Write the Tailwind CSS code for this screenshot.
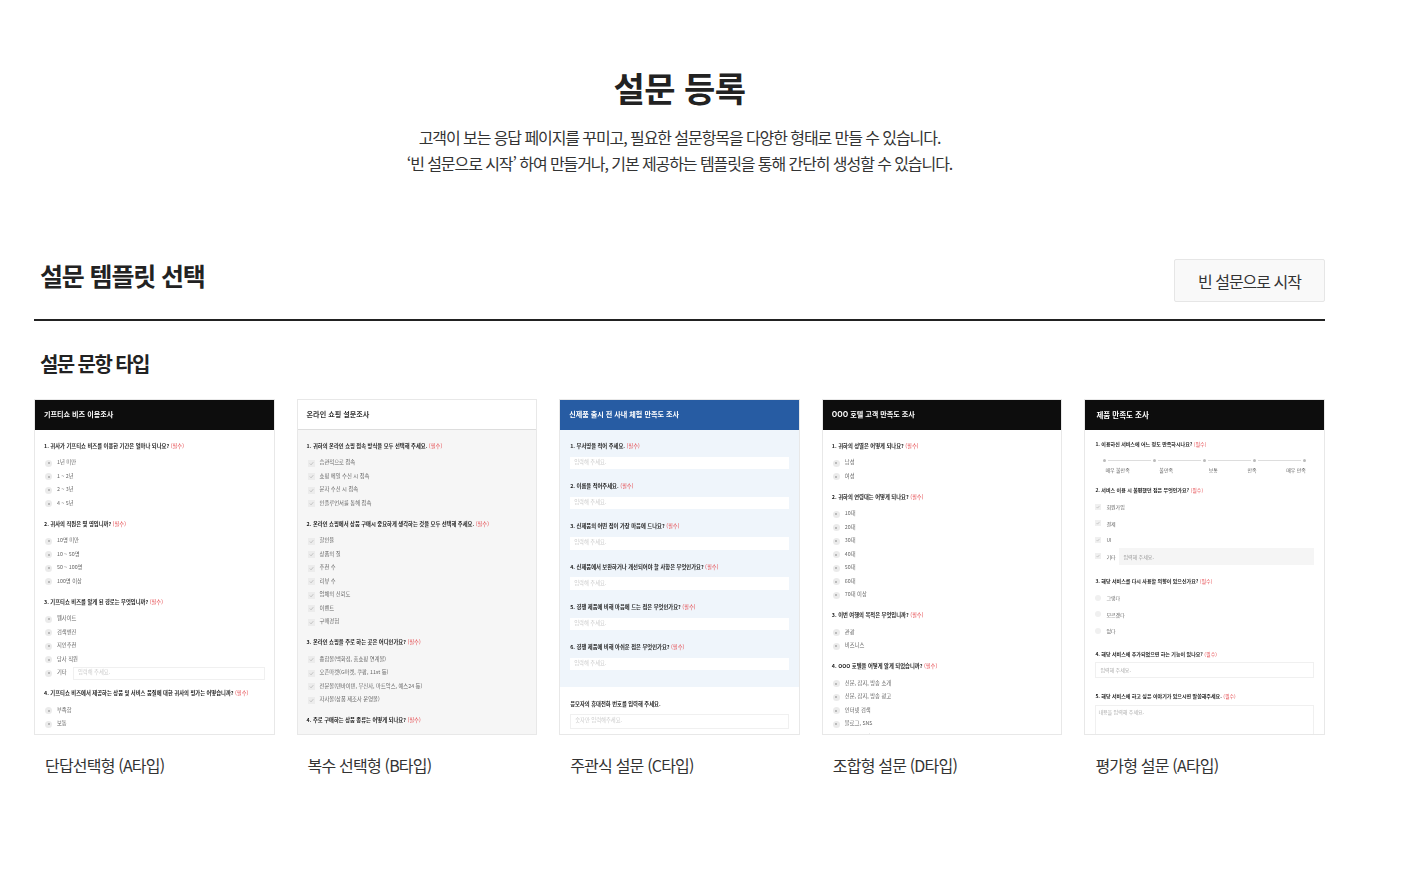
<!DOCTYPE html>
<html lang="ko"><head><meta charset="utf-8"><script src="https://cdn.jsdelivr.net/npm/@tailwindcss/browser@4"></script><title>설문 등록</title></head>
<body class="bg-white font-['Noto_Sans_CJK_KR','Noto_Sans',sans-serif] text-[#222]">
<main class="w-[1404px] h-[894px] overflow-hidden pl-[34px] pr-[79px]">
<section class="flex flex-col items-center pt-[63px]">
<h1 class="text-[34px] leading-[50px] font-bold tracking-[-0.5px]">설문 등록</h1>
<p class="mt-[11px] text-[16px] leading-[26px] tracking-[-1.08px] text-center text-[#333]">고객이 보는 응답 페이지를 꾸미고, 필요한 설문항목을 다양한 형태로 만들 수 있습니다.<br>‘빈 설문으로 시작’ 하여 만들거나, 기본 제공하는 템플릿을 통해 간단히 생성할 수 있습니다.</p>
</section>
<section class="mt-[83px] h-[62px] flex items-start justify-between border-b-2 border-[#222] pl-[6px]">
<h2 class="text-[25px] leading-[40px] font-bold tracking-[-1.15px] mt-[-4px]">설문 템플릿 선택</h2>
<button class="w-[151px] h-[43px] bg-[#f9f9f9] border border-[#e6e6e6] rounded-[2px] text-[16px] tracking-[-1px] text-[#333]">빈 설문으로 시작</button>
</section>
<h3 class="mt-[28px] ml-[6px] text-[20px] leading-[30px] font-bold tracking-[-1.6px]">설문 문항 타입</h3>
<section class="mt-[20px] grid grid-cols-5 gap-x-[22px]">

<article>
<div class="h-[336px] overflow-hidden border border-[#e8e8e8] flex flex-col text-[5.3px] text-[#666] blur-[0.35px]">
<div class="h-[30px] pb-[1px] shrink-0 bg-[#0d0d0d] text-white text-[7.1px] font-bold flex items-center pl-[9px]">기프티쇼 비즈 이용조사</div>
<div class="pt-[10px] pl-[9px] pr-[9px]">
<p class="h-[13.5px] mb-[3px] flex items-center font-bold text-[#222]">1. 귀사가 기프티쇼 비즈를 이용한 기간은 얼마나 되나요?&nbsp;<span class="font-normal text-[#e5484d]">(필수)</span></p>
<div class="h-[13.5px] flex items-center gap-[5px] pl-[1px]"><i class="w-[7px] h-[7px] rounded-full bg-[#ebebeb] flex items-center justify-center"><b class="w-[2px] h-[2px] rounded-full bg-[#aaa]"></b></i>1년 미만</div>
<div class="h-[13.5px] flex items-center gap-[5px] pl-[1px]"><i class="w-[7px] h-[7px] rounded-full bg-[#ebebeb] flex items-center justify-center"><b class="w-[2px] h-[2px] rounded-full bg-[#aaa]"></b></i>1 ~ 2년</div>
<div class="h-[13.5px] flex items-center gap-[5px] pl-[1px]"><i class="w-[7px] h-[7px] rounded-full bg-[#ebebeb] flex items-center justify-center"><b class="w-[2px] h-[2px] rounded-full bg-[#aaa]"></b></i>2 ~ 3년</div>
<div class="h-[13.5px] flex items-center gap-[5px] pl-[1px]"><i class="w-[7px] h-[7px] rounded-full bg-[#ebebeb] flex items-center justify-center"><b class="w-[2px] h-[2px] rounded-full bg-[#aaa]"></b></i>4 ~ 5년</div>
<p class="h-[13.5px] mt-[7.5px] mb-[3px] flex items-center font-bold text-[#222]">2. 귀사의 직원은 몇 명입니까?&nbsp;<span class="font-normal text-[#e5484d]">(필수)</span></p>
<div class="h-[13.5px] flex items-center gap-[5px] pl-[1px]"><i class="w-[7px] h-[7px] rounded-full bg-[#ebebeb] flex items-center justify-center"><b class="w-[2px] h-[2px] rounded-full bg-[#aaa]"></b></i>10명 미만</div>
<div class="h-[13.5px] flex items-center gap-[5px] pl-[1px]"><i class="w-[7px] h-[7px] rounded-full bg-[#ebebeb] flex items-center justify-center"><b class="w-[2px] h-[2px] rounded-full bg-[#aaa]"></b></i>10 ~ 50명</div>
<div class="h-[13.5px] flex items-center gap-[5px] pl-[1px]"><i class="w-[7px] h-[7px] rounded-full bg-[#ebebeb] flex items-center justify-center"><b class="w-[2px] h-[2px] rounded-full bg-[#aaa]"></b></i>50 ~ 100명</div>
<div class="h-[13.5px] flex items-center gap-[5px] pl-[1px]"><i class="w-[7px] h-[7px] rounded-full bg-[#ebebeb] flex items-center justify-center"><b class="w-[2px] h-[2px] rounded-full bg-[#aaa]"></b></i>100명 이상</div>
<p class="h-[13.5px] mt-[7.5px] mb-[3px] flex items-center font-bold text-[#222]">3. 기프티쇼 비즈를 알게 된 경로는 무엇입니까?&nbsp;<span class="font-normal text-[#e5484d]">(필수)</span></p>
<div class="h-[13.5px] flex items-center gap-[5px] pl-[1px]"><i class="w-[7px] h-[7px] rounded-full bg-[#ebebeb] flex items-center justify-center"><b class="w-[2px] h-[2px] rounded-full bg-[#aaa]"></b></i>웹사이트</div>
<div class="h-[13.5px] flex items-center gap-[5px] pl-[1px]"><i class="w-[7px] h-[7px] rounded-full bg-[#ebebeb] flex items-center justify-center"><b class="w-[2px] h-[2px] rounded-full bg-[#aaa]"></b></i>검색엔진</div>
<div class="h-[13.5px] flex items-center gap-[5px] pl-[1px]"><i class="w-[7px] h-[7px] rounded-full bg-[#ebebeb] flex items-center justify-center"><b class="w-[2px] h-[2px] rounded-full bg-[#aaa]"></b></i>지인추천</div>
<div class="h-[13.5px] flex items-center gap-[5px] pl-[1px]"><i class="w-[7px] h-[7px] rounded-full bg-[#ebebeb] flex items-center justify-center"><b class="w-[2px] h-[2px] rounded-full bg-[#aaa]"></b></i>당사 직원</div>
<div class="h-[13.5px] flex items-center gap-[5px] pl-[1px]"><i class="w-[7px] h-[7px] rounded-full bg-[#ebebeb] flex items-center justify-center"><b class="w-[2px] h-[2px] rounded-full bg-[#aaa]"></b></i><span class="w-[11px]">기타</span><span class="flex-1 h-[13.5px] border border-[#f0f0f0] text-[#ccc] pl-[4px] flex items-center">입력해 주세요.</span></div>
<p class="h-[13.5px] mt-[7.5px] mb-[3px] flex items-center font-bold text-[#222]">4. 기프티쇼 비즈에서 제공하는 상품 및 서비스 품질에 대한 귀사의 평가는 어떻습니까?&nbsp;<span class="font-normal text-[#e5484d]">(필수)</span></p>
<div class="h-[13.5px] flex items-center gap-[5px] pl-[1px]"><i class="w-[7px] h-[7px] rounded-full bg-[#ebebeb] flex items-center justify-center"><b class="w-[2px] h-[2px] rounded-full bg-[#aaa]"></b></i>부족함</div>
<div class="h-[13.5px] flex items-center gap-[5px] pl-[1px]"><i class="w-[7px] h-[7px] rounded-full bg-[#ebebeb] flex items-center justify-center"><b class="w-[2px] h-[2px] rounded-full bg-[#aaa]"></b></i>보통</div>
</div></div>
<p class="mt-[18px] pl-[11px] text-[16px] leading-[24px] tracking-[-0.8px] text-[#333]">단답선택형 (A타입)</p>
</article>

<article>
<div class="h-[336px] overflow-hidden border border-[#e8e8e8] flex flex-col text-[5.3px] text-[#666] bg-[#f6f6f6] blur-[0.35px]">
<div class="h-[30px] pb-[1px] shrink-0 bg-white border-b border-[#ddd] text-[#333] text-[7.1px] font-bold flex items-center pl-[9px]">온라인 쇼핑 설문조사</div>
<div class="pt-[10px] pl-[9px] pr-[9px]">
<p class="h-[13.5px] mb-[3px] flex items-center font-bold text-[#222]">1. 귀하의 온라인 쇼핑 접속 방식을 모두 선택해 주세요.&nbsp;<span class="font-normal text-[#e5484d]">(필수)</span></p>
<div class="h-[13.5px] flex items-center gap-[5px] pl-[1px]"><svg class="w-[7px] h-[7px] bg-[#ececec]" viewBox="0 0 8 8"><path d="M2 4l1.5 1.5L6 2.5" fill="none" stroke="#aaa" stroke-width=".7"/></svg>습관적으로 접속</div>
<div class="h-[13.5px] flex items-center gap-[5px] pl-[1px]"><svg class="w-[7px] h-[7px] bg-[#ececec]" viewBox="0 0 8 8"><path d="M2 4l1.5 1.5L6 2.5" fill="none" stroke="#aaa" stroke-width=".7"/></svg>쇼핑 메일 수신 시 접속</div>
<div class="h-[13.5px] flex items-center gap-[5px] pl-[1px]"><svg class="w-[7px] h-[7px] bg-[#ececec]" viewBox="0 0 8 8"><path d="M2 4l1.5 1.5L6 2.5" fill="none" stroke="#aaa" stroke-width=".7"/></svg>문자 수신 시 접속</div>
<div class="h-[13.5px] flex items-center gap-[5px] pl-[1px]"><svg class="w-[7px] h-[7px] bg-[#ececec]" viewBox="0 0 8 8"><path d="M2 4l1.5 1.5L6 2.5" fill="none" stroke="#aaa" stroke-width=".7"/></svg>인플루언서를 통해 접속</div>
<p class="h-[13.5px] mt-[7.5px] mb-[3px] flex items-center font-bold text-[#222]">2. 온라인 쇼핑에서 상품 구매시 중요하게 생각하는 것을 모두 선택해 주세요.&nbsp;<span class="font-normal text-[#e5484d]">(필수)</span></p>
<div class="h-[13.5px] flex items-center gap-[5px] pl-[1px]"><svg class="w-[7px] h-[7px] bg-[#ececec]" viewBox="0 0 8 8"><path d="M2 4l1.5 1.5L6 2.5" fill="none" stroke="#aaa" stroke-width=".7"/></svg>할인율</div>
<div class="h-[13.5px] flex items-center gap-[5px] pl-[1px]"><svg class="w-[7px] h-[7px] bg-[#ececec]" viewBox="0 0 8 8"><path d="M2 4l1.5 1.5L6 2.5" fill="none" stroke="#aaa" stroke-width=".7"/></svg>상품의 질</div>
<div class="h-[13.5px] flex items-center gap-[5px] pl-[1px]"><svg class="w-[7px] h-[7px] bg-[#ececec]" viewBox="0 0 8 8"><path d="M2 4l1.5 1.5L6 2.5" fill="none" stroke="#aaa" stroke-width=".7"/></svg>추천 수</div>
<div class="h-[13.5px] flex items-center gap-[5px] pl-[1px]"><svg class="w-[7px] h-[7px] bg-[#ececec]" viewBox="0 0 8 8"><path d="M2 4l1.5 1.5L6 2.5" fill="none" stroke="#aaa" stroke-width=".7"/></svg>리뷰 수</div>
<div class="h-[13.5px] flex items-center gap-[5px] pl-[1px]"><svg class="w-[7px] h-[7px] bg-[#ececec]" viewBox="0 0 8 8"><path d="M2 4l1.5 1.5L6 2.5" fill="none" stroke="#aaa" stroke-width=".7"/></svg>업체의 신뢰도</div>
<div class="h-[13.5px] flex items-center gap-[5px] pl-[1px]"><svg class="w-[7px] h-[7px] bg-[#ececec]" viewBox="0 0 8 8"><path d="M2 4l1.5 1.5L6 2.5" fill="none" stroke="#aaa" stroke-width=".7"/></svg>이벤트</div>
<div class="h-[13.5px] flex items-center gap-[5px] pl-[1px]"><svg class="w-[7px] h-[7px] bg-[#ececec]" viewBox="0 0 8 8"><path d="M2 4l1.5 1.5L6 2.5" fill="none" stroke="#aaa" stroke-width=".7"/></svg>구매경험</div>
<p class="h-[13.5px] mt-[7.5px] mb-[3px] flex items-center font-bold text-[#222]">3. 온라인 쇼핑을 주로 하는 곳은 어디인가요?&nbsp;<span class="font-normal text-[#e5484d]">(필수)</span></p>
<div class="h-[13.5px] flex items-center gap-[5px] pl-[1px]"><svg class="w-[7px] h-[7px] bg-[#ececec]" viewBox="0 0 8 8"><path d="M2 4l1.5 1.5L6 2.5" fill="none" stroke="#aaa" stroke-width=".7"/></svg>종합몰(백화점, 홈쇼핑 연계몰)</div>
<div class="h-[13.5px] flex items-center gap-[5px] pl-[1px]"><svg class="w-[7px] h-[7px] bg-[#ececec]" viewBox="0 0 8 8"><path d="M2 4l1.5 1.5L6 2.5" fill="none" stroke="#aaa" stroke-width=".7"/></svg>오픈마켓(G마켓, 쿠팡, 11st 등)</div>
<div class="h-[13.5px] flex items-center gap-[5px] pl-[1px]"><svg class="w-[7px] h-[7px] bg-[#ececec]" viewBox="0 0 8 8"><path d="M2 4l1.5 1.5L6 2.5" fill="none" stroke="#aaa" stroke-width=".7"/></svg>전문몰(텐바이텐, 무신사, 마트악스, 예스24 등)</div>
<div class="h-[13.5px] flex items-center gap-[5px] pl-[1px]"><svg class="w-[7px] h-[7px] bg-[#ececec]" viewBox="0 0 8 8"><path d="M2 4l1.5 1.5L6 2.5" fill="none" stroke="#aaa" stroke-width=".7"/></svg>자사몰(상품 제조사 운영몰)</div>
<p class="h-[13.5px] mt-[7.5px] mb-[3px] flex items-center font-bold text-[#222]">4. 주로 구매하는 상품 종류는 어떻게 되나요?&nbsp;<span class="font-normal text-[#e5484d]">(필수)</span></p>
<div class="h-[13.5px] flex items-center gap-[5px] pl-[1px]"><svg class="w-[7px] h-[7px] bg-[#ececec]" viewBox="0 0 8 8"><path d="M2 4l1.5 1.5L6 2.5" fill="none" stroke="#aaa" stroke-width=".7"/></svg>패션잡화</div>
</div></div>
<p class="mt-[18px] pl-[11px] text-[16px] leading-[24px] tracking-[-0.8px] text-[#333]">복수 선택형 (B타입)</p>
</article>

<article>
<div class="h-[336px] overflow-hidden border border-[#e8e8e8] flex flex-col text-[5.3px] text-[#666] bg-white blur-[0.35px]">
<div class="h-[30px] pb-[1px] shrink-0 bg-[#275ca3] text-white text-[7.1px] font-bold flex items-center pl-[9px]">신제품 출시 전 사내 체험 만족도 조사</div>
<div class="h-[257px] shrink-0 bg-[#eff5fb] pt-[10px] px-[10px]">
<p class="h-[13.5px] mb-[3px] flex items-center font-bold text-[#222]">1. 부서명을 적어 주세요.&nbsp;<span class="font-normal text-[#e5484d]">(필수)</span></p>
<div class="h-[12.5px] mb-[11.3px] bg-white text-[#ccc] pl-[4px] flex items-center">입력해 주세요.</div>
<p class="h-[13.5px] mb-[3px] flex items-center font-bold text-[#222]">2. 이름을 적어주세요.&nbsp;<span class="font-normal text-[#e5484d]">(필수)</span></p>
<div class="h-[12.5px] mb-[11.3px] bg-white text-[#ccc] pl-[4px] flex items-center">입력해 주세요.</div>
<p class="h-[13.5px] mb-[3px] flex items-center font-bold text-[#222]">3. 신제품의 어떤 점이 가장 마음에 드나요?&nbsp;<span class="font-normal text-[#e5484d]">(필수)</span></p>
<div class="h-[12.5px] mb-[11.3px] bg-white text-[#ccc] pl-[4px] flex items-center">입력해 주세요.</div>
<p class="h-[13.5px] mb-[3px] flex items-center font-bold text-[#222]">4. 신제품에서 보완하거나 개선되어야 할 사항은 무엇인가요?&nbsp;<span class="font-normal text-[#e5484d]">(필수)</span></p>
<div class="h-[12.5px] mb-[11.3px] bg-white text-[#ccc] pl-[4px] flex items-center">입력해 주세요.</div>
<p class="h-[13.5px] mb-[3px] flex items-center font-bold text-[#222]">5. 경쟁 제품에 비해 마음에 드는 점은 무엇인가요?&nbsp;<span class="font-normal text-[#e5484d]">(필수)</span></p>
<div class="h-[12.5px] mb-[11.3px] bg-white text-[#ccc] pl-[4px] flex items-center">입력해 주세요.</div>
<p class="h-[13.5px] mb-[3px] flex items-center font-bold text-[#222]">6. 경쟁 제품에 비해 아쉬운 점은 무엇인가요?&nbsp;<span class="font-normal text-[#e5484d]">(필수)</span></p>
<div class="h-[12.5px] bg-white text-[#ccc] pl-[4px] flex items-center">입력해 주세요.</div>
</div>
<div class="pt-[11px] px-[10px]">
<p class="h-[13.5px] mb-[2px] flex items-center font-bold text-[#222]">응모자의 휴대전화 번호를 입력해 주세요.</p>
<div class="h-[15px] border border-[#f0f0f0] text-[#ccc] pl-[4px] flex items-center">숫자만 입력해주세요.</div>
</div></div>
<p class="mt-[18px] pl-[11px] text-[16px] leading-[24px] tracking-[-0.8px] text-[#333]">주관식 설문 (C타입)</p>
</article>

<article>
<div class="h-[336px] overflow-hidden border border-[#e8e8e8] flex flex-col text-[5.3px] text-[#666] blur-[0.35px]">
<div class="h-[30px] pb-[1px] shrink-0 bg-[#0d0d0d] text-white text-[7.1px] font-bold flex items-center pl-[9px]">OOO 호텔 고객 만족도 조사</div>
<div class="pt-[10px] pl-[9px] pr-[9px]">
<p class="h-[13.5px] mb-[3px] flex items-center font-bold text-[#222]">1. 귀하의 성별은 어떻게 되나요?&nbsp;<span class="font-normal text-[#e5484d]">(필수)</span></p>
<div class="h-[13.5px] flex items-center gap-[5px] pl-[1px]"><i class="w-[7px] h-[7px] rounded-full bg-[#ebebeb] flex items-center justify-center"><b class="w-[2px] h-[2px] rounded-full bg-[#aaa]"></b></i>남성</div>
<div class="h-[13.5px] flex items-center gap-[5px] pl-[1px]"><i class="w-[7px] h-[7px] rounded-full bg-[#ebebeb] flex items-center justify-center"><b class="w-[2px] h-[2px] rounded-full bg-[#aaa]"></b></i>여성</div>
<p class="h-[13.5px] mt-[7.5px] mb-[3px] flex items-center font-bold text-[#222]">2. 귀하의 연령대는 어떻게 되나요?&nbsp;<span class="font-normal text-[#e5484d]">(필수)</span></p>
<div class="h-[13.5px] flex items-center gap-[5px] pl-[1px]"><i class="w-[7px] h-[7px] rounded-full bg-[#ebebeb] flex items-center justify-center"><b class="w-[2px] h-[2px] rounded-full bg-[#aaa]"></b></i>10대</div>
<div class="h-[13.5px] flex items-center gap-[5px] pl-[1px]"><i class="w-[7px] h-[7px] rounded-full bg-[#ebebeb] flex items-center justify-center"><b class="w-[2px] h-[2px] rounded-full bg-[#aaa]"></b></i>20대</div>
<div class="h-[13.5px] flex items-center gap-[5px] pl-[1px]"><i class="w-[7px] h-[7px] rounded-full bg-[#ebebeb] flex items-center justify-center"><b class="w-[2px] h-[2px] rounded-full bg-[#aaa]"></b></i>30대</div>
<div class="h-[13.5px] flex items-center gap-[5px] pl-[1px]"><i class="w-[7px] h-[7px] rounded-full bg-[#ebebeb] flex items-center justify-center"><b class="w-[2px] h-[2px] rounded-full bg-[#aaa]"></b></i>40대</div>
<div class="h-[13.5px] flex items-center gap-[5px] pl-[1px]"><i class="w-[7px] h-[7px] rounded-full bg-[#ebebeb] flex items-center justify-center"><b class="w-[2px] h-[2px] rounded-full bg-[#aaa]"></b></i>50대</div>
<div class="h-[13.5px] flex items-center gap-[5px] pl-[1px]"><i class="w-[7px] h-[7px] rounded-full bg-[#ebebeb] flex items-center justify-center"><b class="w-[2px] h-[2px] rounded-full bg-[#aaa]"></b></i>60대</div>
<div class="h-[13.5px] flex items-center gap-[5px] pl-[1px]"><i class="w-[7px] h-[7px] rounded-full bg-[#ebebeb] flex items-center justify-center"><b class="w-[2px] h-[2px] rounded-full bg-[#aaa]"></b></i>70대 이상</div>
<p class="h-[13.5px] mt-[7.5px] mb-[3px] flex items-center font-bold text-[#222]">3. 이번 여행의 목적은 무엇입니까?&nbsp;<span class="font-normal text-[#e5484d]">(필수)</span></p>
<div class="h-[13.5px] flex items-center gap-[5px] pl-[1px]"><i class="w-[7px] h-[7px] rounded-full bg-[#ebebeb] flex items-center justify-center"><b class="w-[2px] h-[2px] rounded-full bg-[#aaa]"></b></i>관광</div>
<div class="h-[13.5px] flex items-center gap-[5px] pl-[1px]"><i class="w-[7px] h-[7px] rounded-full bg-[#ebebeb] flex items-center justify-center"><b class="w-[2px] h-[2px] rounded-full bg-[#aaa]"></b></i>비즈니스</div>
<p class="h-[13.5px] mt-[7.5px] mb-[3px] flex items-center font-bold text-[#222]">4. OOO 호텔을 어떻게 알게 되었습니까?&nbsp;<span class="font-normal text-[#e5484d]">(필수)</span></p>
<div class="h-[13.5px] flex items-center gap-[5px] pl-[1px]"><i class="w-[7px] h-[7px] rounded-full bg-[#ebebeb] flex items-center justify-center"><b class="w-[2px] h-[2px] rounded-full bg-[#aaa]"></b></i>신문, 잡지, 방송 소개</div>
<div class="h-[13.5px] flex items-center gap-[5px] pl-[1px]"><i class="w-[7px] h-[7px] rounded-full bg-[#ebebeb] flex items-center justify-center"><b class="w-[2px] h-[2px] rounded-full bg-[#aaa]"></b></i>신문, 잡지, 방송 광고</div>
<div class="h-[13.5px] flex items-center gap-[5px] pl-[1px]"><i class="w-[7px] h-[7px] rounded-full bg-[#ebebeb] flex items-center justify-center"><b class="w-[2px] h-[2px] rounded-full bg-[#aaa]"></b></i>인터넷 검색</div>
<div class="h-[13.5px] flex items-center gap-[5px] pl-[1px]"><i class="w-[7px] h-[7px] rounded-full bg-[#ebebeb] flex items-center justify-center"><b class="w-[2px] h-[2px] rounded-full bg-[#aaa]"></b></i>블로그, SNS</div>
<div class="h-[13.5px] flex items-center gap-[5px] pl-[1px]"><i class="w-[7px] h-[7px] rounded-full bg-[#ebebeb] flex items-center justify-center"><b class="w-[2px] h-[2px] rounded-full bg-[#aaa]"></b></i>주변인의 권유</div>
</div></div>
<p class="mt-[18px] pl-[11px] text-[16px] leading-[24px] tracking-[-0.8px] text-[#333]">조합형 설문 (D타입)</p>
</article>

<article>
<div class="h-[336px] overflow-hidden border border-[#e8e8e8] flex flex-col text-[5px] text-[#666] blur-[0.4px]">
<div class="h-[30px] shrink-0 bg-[#0d0d0d] text-white text-[7.5px] font-bold flex items-center pl-[11px]">제품 만족도 조사</div>
<div class="pt-[7px] px-[10px]">
<p class="h-[13.5px] flex items-center font-bold text-[#222]">1. 이용하신 서비스에 어느 정도 만족하시나요?&nbsp;<span class="font-normal text-[#e5484d]">(필수)</span></p>
<div class="mx-[8px] mt-[5px] h-[9px] flex items-center justify-between">
<i class="w-[3px] h-[3px] rounded-full bg-[#bbb]"></i><span class="flex-1 h-px bg-[#ddd] mx-[2px]"></span><i class="w-[3px] h-[3px] rounded-full bg-[#bbb]"></i><span class="flex-1 h-px bg-[#ddd] mx-[2px]"></span><i class="w-[3px] h-[3px] rounded-full bg-[#bbb]"></i><span class="flex-1 h-px bg-[#ddd] mx-[2px]"></span><i class="w-[3px] h-[3px] rounded-full bg-[#bbb]"></i><span class="flex-1 h-px bg-[#ddd] mx-[2px]"></span><i class="w-[3px] h-[3px] rounded-full bg-[#bbb]"></i>
</div>
<div class="mt-[1px] pl-[10px] pr-[8px] h-[9px] flex items-center justify-between"><span>매우 불만족</span><span class="mr-[6px]">불만족</span><span>보통</span><span>만족</span><span>매우 만족</span></div>
<p class="h-[13.5px] mt-[8px] mb-[2.5px] flex items-center font-bold text-[#222]">2. 서비스 이용 시 불편했던 점은 무엇인가요?&nbsp;<span class="font-normal text-[#e5484d]">(필수)</span></p>
<div class="h-[16.5px] flex items-center gap-[5px]"><svg class="w-[6px] h-[6px] bg-[#f0f0f0]" viewBox="0 0 8 8"><path d="M2 4l1.5 1.5L6 2.5" fill="none" stroke="#aaa" stroke-width=".7"/></svg>회원가입</div>
<div class="h-[16.5px] flex items-center gap-[5px]"><svg class="w-[6px] h-[6px] bg-[#f0f0f0]" viewBox="0 0 8 8"><path d="M2 4l1.5 1.5L6 2.5" fill="none" stroke="#aaa" stroke-width=".7"/></svg>결제</div>
<div class="h-[16.5px] flex items-center gap-[5px]"><svg class="w-[6px] h-[6px] bg-[#f0f0f0]" viewBox="0 0 8 8"><path d="M2 4l1.5 1.5L6 2.5" fill="none" stroke="#aaa" stroke-width=".7"/></svg>UI</div>
<div class="h-[16.5px] flex items-center gap-[5px]"><svg class="w-[6px] h-[6px] bg-[#f0f0f0]" viewBox="0 0 8 8"><path d="M2 4l1.5 1.5L6 2.5" fill="none" stroke="#aaa" stroke-width=".7"/></svg><span class="w-[8px] whitespace-nowrap">기타</span><span class="flex-1 h-[16.5px] bg-[#f5f5f5] text-[#999] pl-[4px] flex items-center">입력해 주세요.</span></div>
<p class="h-[13.5px] mt-[9px] mb-[2.5px] flex items-center font-bold text-[#222]">3. 해당 서비스를 다시 사용할 의향이 있으신가요?&nbsp;<span class="font-normal text-[#e5484d]">(필수)</span></p>
<div class="h-[16.5px] flex items-center gap-[5px]"><i class="w-[6px] h-[6px] rounded-full bg-[#f0f0f0]"></i>그렇다</div>
<div class="h-[16.5px] flex items-center gap-[5px]"><i class="w-[6px] h-[6px] rounded-full bg-[#f0f0f0]"></i>모르겠다</div>
<div class="h-[16.5px] flex items-center gap-[5px]"><i class="w-[6px] h-[6px] rounded-full bg-[#f0f0f0]"></i>없다</div>
<p class="h-[13.5px] mt-[8px] mb-[1.5px] flex items-center font-bold text-[#222]">4. 해당 서비스에 추가되었으면 하는 기능이 있나요?&nbsp;<span class="font-normal text-[#e5484d]">(필수)</span></p>
<div class="h-[16px] border border-[#f0f0f0] text-[#aaa] pl-[4px] flex items-center">입력해 주세요.</div>
<p class="h-[13.5px] mt-[11px] mb-[2.5px] flex items-center font-bold text-[#222]">5. 해당 서비스에 하고 싶은 이야기가 있으시면 말씀해주세요.&nbsp;<span class="font-normal text-[#e5484d]">(필수)</span></p>
<div class="h-[40px] border border-[#f0f0f0] text-[#aaa] pl-[2px] pt-[2px]">내용을 입력해 주세요.</div>
</div></div>
<p class="mt-[18px] pl-[11px] text-[16px] leading-[24px] tracking-[-0.8px] text-[#333]">평가형 설문 (A타입)</p>
</article>
</section>
</main>
</body></html>
